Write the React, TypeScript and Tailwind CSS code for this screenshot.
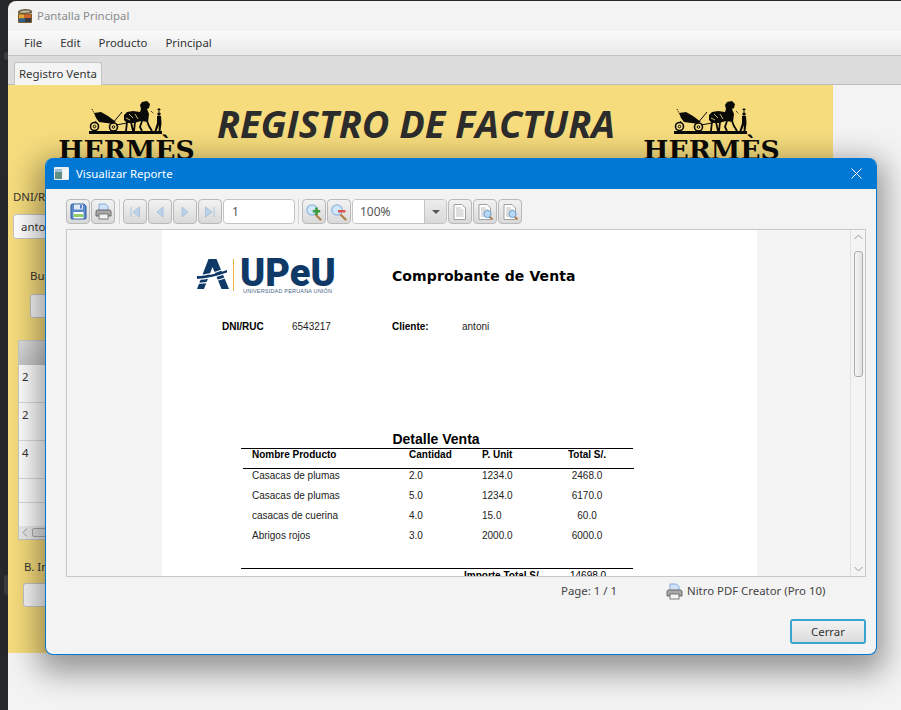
import React from "react";

const ui = { fontFamily: '"Noto Sans", "Liberation Sans", sans-serif' };
const arial = { fontFamily: '"Liberation Sans", Arial, sans-serif' };

function AppIcon() {
  return (
    <svg width="16" height="16" viewBox="0 0 16 16" className="shrink-0">
      <path d="M1 4 Q1 1.5 8 1 Q15 1 15 3.5 L15 5 Q8 7 1 5.5Z" fill="#6b5a3e" />
      <path d="M3 3.5 Q8 2 13 3 L13 4 Q8 5 3 4.5Z" fill="#c7c1ad" />
      <rect x="1" y="5.5" width="14" height="9.5" rx="1" fill="#7c5a28" />
      <rect x="2" y="6.5" width="5" height="4" fill="#e0a83c" />
      <rect x="7" y="6.5" width="7" height="3.5" fill="#d0642c" />
      <rect x="2" y="10.5" width="6" height="3.5" fill="#2e5f8f" />
      <rect x="8" y="10" width="6" height="4" fill="#3a3b40" />
    </svg>
  );
}

function Carriage() {
  return (
    <svg width="75" height="33" viewBox="0 0 75 33" className="block">
      <rect x="0" y="30" width="73" height="3" fill="#0a0a08" />
      <g fill="none" stroke="#0a0a08">
        <circle cx="5.5" cy="25.5" r="4" strokeWidth="1.6" />
        <circle cx="5.5" cy="25.5" r="1.3" strokeWidth="1" />
        <circle cx="24.5" cy="26" r="4" strokeWidth="1.6" />
        <circle cx="24.5" cy="26" r="1.3" strokeWidth="1" />
        <path d="M23 23 L33 11" strokeWidth="1" />
        <path d="M27 24 L38 22" strokeWidth="1" />
        <path d="M3 8 L5 12" strokeWidth="1" strokeDasharray="1 1" />
        <path d="M7 20 L6 22 M21 20 L23 23" strokeWidth="1" />
      </g>
      <path d="M5 12 L12 11 L19 15 L27 21 L21 22.5 L10 21 L7 17Z" fill="#0a0a08" />
      <path d="M35 14 L38 11 L44 10 L51 11 L52 8 L51 4 L53 1 L58 0 L61 3 L60 7 L58 8 L60 13 L59 21 L52 20 L45 22 L38 22 L35 19Z" fill="#0a0a08" />
      <path d="M38 21 L37 30 M42 21 L44 30 M46 21 L45 30 M53 20 L51 26 L53 30 M58 20 L60 25 L63 30" fill="none" stroke="#0a0a08" strokeWidth="1.8" />
      <path d="M40 13 L44 17 M46 13 L49 18 M37 17 L41 19" stroke="#f6dc7d" strokeWidth="0.8" />
      <path d="M62 10 L65 13" stroke="#0a0a08" strokeWidth="1" strokeDasharray="1 1" />
      <circle cx="70" cy="13" r="1.7" fill="#0a0a08" />
      <path d="M70 7 V11 M68.5 8.5 H71.5" stroke="#0a0a08" strokeWidth="1" />
      <path d="M68 15 H72 L72.5 22 L71.5 30 H69.5 L70 24 L67.5 30 H65.5 L68 22Z" fill="#0a0a08" />
    </svg>
  );
}

function Hermes() {
  return (
    <div className="flex flex-col items-center w-[133px] shrink-0">
      <Carriage />
      <div
        className="text-[26.6px] leading-[30px] mt-[1px] font-bold text-[#0a0a08] whitespace-nowrap"
        style={{ fontFamily: '"DejaVu Serif", serif' }}
      >
        HERMÈS
      </div>
    </div>
  );
}

function TBtn({ children }: { children?: React.ReactNode }) {
  return (
    <div className="w-[24px] h-[25px] shrink-0 flex items-center justify-center rounded-[4px] border border-[#b9b9b9] bg-gradient-to-b from-[#f2f2f2] to-[#d9d9d9]">
      {children}
    </div>
  );
}

function Save() {
  return (
    <svg width="17" height="17" viewBox="0 0 17 17">
      <path d="M1 2.5 Q1 1 2.5 1 H14 L16 3 V15 Q16 16 15 16 H2 Q1 16 1 15Z" fill="#5a88c8" stroke="#2f5a9c" strokeWidth="1" />
      <rect x="4" y="1.5" width="9" height="5" fill="#dfe9f6" />
      <rect x="10" y="2" width="2" height="3.5" fill="#4f7fc4" />
      <rect x="3.5" y="9" width="10" height="6.5" fill="#fff" />
      <rect x="3.5" y="11" width="10" height="3" fill="#8fcf6a" />
    </svg>
  );
}

function Printer() {
  return (
    <svg width="17" height="17" viewBox="0 0 17 17">
      <path d="M4 1 H10.5 L13 3.5 V8 H4Z" fill="#cfe2f8" stroke="#7aa5d8" strokeWidth="0.9" />
      <path d="M2.5 7 H14.5 Q16 7 16 9 V13 H1 V9 Q1 7 2.5 7Z" fill="#a8a8a8" stroke="#5e5e5e" strokeWidth="0.9" />
      <rect x="4" y="11" width="9" height="5" fill="#f4f4f4" stroke="#6f6f6f" strokeWidth="0.9" />
    </svg>
  );
}

function Nav({ d }: { d: string }) {
  return (
    <svg width="14" height="14" viewBox="0 0 14 14">
      <path d={d} fill="#bcd2e9" stroke="#a9c3de" strokeWidth="1" />
    </svg>
  );
}

function Zoom({ plus }: { plus: boolean }) {
  return (
    <svg width="18" height="18" viewBox="0 0 18 18">
      <path d="M10 11 L15.5 16.5" stroke="#b4814a" strokeWidth="2.4" strokeLinecap="round" />
      <circle cx="7" cy="7" r="5.2" fill="#cfe6fb" stroke="#8fb6de" strokeWidth="1.2" />
      {plus ? (
        <path d="M11.5 4.5 V12 M7.8 8.2 H15.2" stroke="#3f9a3c" strokeWidth="2.6" />
      ) : (
        <path d="M8 8.2 H15.5" stroke="#d9534f" strokeWidth="2.6" />
      )}
    </svg>
  );
}

function PageIcon({ kind }: { kind: "full" | "h" | "w" }) {
  return (
    <svg width="18" height="18" viewBox="0 0 18 18">
      <path d="M3 1.5 H11 L14.5 5 V16.5 H3Z" fill="#fff" stroke="#a0a0a0" strokeWidth="1" />
      <path d="M5 5 H10 M5 7 H12.5 M5 9 H12.5 M5 11 H12.5 M5 13 H12.5" stroke="#b5b5b5" strokeWidth="0.9" />
      {kind !== "full" && (
        <>
          <path d="M13 13 L16.5 16.5" stroke="#b4814a" strokeWidth="2" />
          <circle cx="11.5" cy="11" r="3.6" fill="#b7d8f5" stroke="#6f9fd0" strokeWidth="1" />
        </>
      )}
    </svg>
  );
}

function Logo() {
  return (
    <div className="flex items-start h-[36px] mt-[2px]">
      <svg width="33" height="30" viewBox="0 0 33 30" className="shrink-0">
        <path d="M11.5 0 H19.5 L32 30 H24.5 L15.5 8 L7 30 H0Z" fill="#0f3a68" />
        <path d="M0 17 Q14 17 30 11 V14 Q14 20 0 20Z" fill="#0f3a68" />
        <path d="M1 16.5 Q14 16 28 9.5 M0 20.5 Q14 20 30 14 M0 24.5 Q14 24 31 18" stroke="#fff" strokeWidth="1.2" fill="none" />
      </svg>
      <div className="w-[1px] h-[32px] bg-[#eeb040] ml-[3px]" />
      <div className="ml-[6px] flex flex-col">
        <span className="text-[38px] leading-[29px] font-black text-[#0f3a68]" style={{ fontFamily: "Roboto, sans-serif" }}>
          UPeU
        </span>
        <span className="ml-[3px] text-[5.5px] leading-[7px] text-[#4a6688] whitespace-nowrap tracking-[0.18px]" style={arial}>
          UNIVERSIDAD PERUANA UNIÓN
        </span>
      </div>
    </div>
  );
}

const rows = [
  ["Casacas de plumas", "2.0", "1234.0", "2468.0"],
  ["Casacas de plumas", "5.0", "1234.0", "6170.0"],
  ["casacas de cuerina", "4.0", "15.0", "60.0"],
  ["Abrigos rojos", "3.0", "2000.0", "6000.0"],
];

const cols = "grid grid-cols-[157px_73px_72px_66px]";

function Report() {
  return (
    <div className="w-[595px] h-[346px] bg-white overflow-hidden shrink-0 text-black" style={arial}>
      <div className="flex pt-[27px] pl-[35px] h-[84px]">
        <div className="w-[195px]">
          <Logo />
        </div>
        <div
          className="text-[14px] font-bold leading-[20px] mt-[9px] whitespace-nowrap tracking-[0.1px]"
          style={{ fontFamily: '"DejaVu Sans", sans-serif' }}
        >
          Comprobante de Venta
        </div>
      </div>
      <div className="flex pl-[60px] text-[10px] leading-[12px] h-[100px] pt-[7px]">
        <span className="w-[70px] font-bold">DNI/RUC</span>
        <span className="w-[100px] text-[#222]">6543217</span>
        <span className="w-[70px] font-bold">Cliente:</span>
        <span className="text-[#222]">antoni</span>
      </div>
      <div className="w-[392px] ml-[79px] mt-[17px]">
        <div className="text-center text-[14px] font-bold leading-[16px] h-[17px] -ml-[2px]">Detalle Venta</div>
        <div className="h-[1px] bg-black" />
        <div className={`${cols} pl-[11px] text-[10px] font-bold leading-[12px] h-[20px] border-b border-black ml-[2px] -mr-[1px]`}>
          <span className="-ml-[2px] whitespace-nowrap">Nombre Producto</span>
          <span className="-ml-[2px]">Cantidad</span>
          <span className="-ml-[2px]">P. Unit</span>
          <span className="-ml-[4px] text-center">Total S/.</span>
        </div>
        <div className="-mt-[3px]">
          {rows.map((r, i) => (
            <div key={i} className={`${cols} pl-[11px] text-[10px] leading-[12px] h-[20px] items-center text-[#222]`}>
              <span className="whitespace-nowrap">{r[0]}</span>
              <span>{r[1]}</span>
              <span>{r[2]}</span>
              <span className="text-center">{r[3]}</span>
            </div>
          ))}
        </div>
        <div className="h-[1px] bg-black mt-[22px]" />
        <div className="flex pl-[223px] text-[10px] leading-[12px] pt-[1px]">
          <span className="w-[106px] font-bold whitespace-nowrap">Importe Total S/.</span>
          <span>14698.0</span>
        </div>
      </div>
    </div>
  );
}

function Dialog() {
  return (
    <div
      className="absolute left-[45px] top-[158px] w-[832px] h-[497px] rounded-[8px] overflow-hidden border-x border-b border-[#0078d4] bg-[#f3f3f3] flex flex-col shadow-[0_10px_30px_8px_rgba(0,0,0,0.38)]"
      style={ui}
    >
      <div className="h-[31px] shrink-0 -mx-[1px] bg-[#0078d4] flex items-center pl-[9px] pr-[15px] text-white">
        <svg width="15" height="13" viewBox="0 0 15 13" className="shrink-0">
          <rect width="15" height="13" rx="1" fill="#e8eef2" />
          <rect x="1" y="2" width="7" height="10" fill="#5f8f82" />
          <rect x="1" y="2" width="7" height="3" fill="#9fc0d8" />
          <rect x="9" y="2" width="5" height="10" fill="#f4f6f7" />
        </svg>
        <span className="ml-[7px] text-[11.4px] leading-none">Visualizar Reporte</span>
        <svg width="11" height="11" viewBox="0 0 11 11" className="ml-auto">
          <path d="M0.5 0.5 L10.5 10.5 M10.5 0.5 L0.5 10.5" stroke="#fff" strokeWidth="1" />
        </svg>
      </div>

      <div className="flex items-center h-[25px] mt-[10px] ml-[20px] text-[12px]">
        <TBtn><Save /></TBtn>
        <div className="w-[1px]" />
        <TBtn><Printer /></TBtn>
        <div className="w-[1px] h-[25px] bg-[#d4d4d4] mx-[3.5px]" />
        <div className="flex gap-[1px] items-center">
          <TBtn><Nav d="M3 2 V12 M11.5 2 L5 7 L11.5 12Z" /></TBtn>
          <TBtn><Nav d="M10 2 L4 7 L10 12Z" /></TBtn>
          <TBtn><Nav d="M4 2 L10 7 L4 12Z" /></TBtn>
          <TBtn><Nav d="M11 2 V12 M2.5 2 L9 7 L2.5 12Z" /></TBtn>
        </div>
        <div className="w-[72px] h-[25px] ml-[1px] bg-white border border-[#c4c4c4] rounded-[4px] flex items-center pl-[8px] text-[#555]">1</div>
        <div className="w-[1px] h-[25px] bg-[#d4d4d4] mx-[3px]" />
        <TBtn><Zoom plus /></TBtn>
        <div className="w-[1px]" />
        <TBtn><Zoom plus={false} /></TBtn>
        <div className="w-[95px] h-[25px] ml-[1px] flex border border-[#c4c4c4] rounded-[4px] overflow-hidden shrink-0">
          <div className="w-[71px] bg-white flex items-center pl-[7px] text-[#555]">100%</div>
          <div className="flex-1 border-l border-[#c4c4c4] bg-gradient-to-b from-[#ececec] to-[#d9d9d9] flex items-center justify-center">
            <div className="w-0 h-0 border-x-[4px] border-x-transparent border-t-[4px] border-t-[#555]" />
          </div>
        </div>
        <div className="flex gap-[1px] ml-[1px]">
          <TBtn><PageIcon kind="full" /></TBtn>
          <TBtn><PageIcon kind="h" /></TBtn>
          <TBtn><PageIcon kind="w" /></TBtn>
        </div>
      </div>

      <div className="h-[348px] mt-[5px] ml-[20px] w-[800px] border border-[#c8c8c8] bg-[#f4f4f4] flex shrink-0">
        <div className="flex-1 pl-[95px]">
          <Report />
        </div>
        <div className="w-[15px] shrink-0 border-l border-[#e2e2e2] flex flex-col items-center pt-[3px] pb-[3px]">
          <svg width="9" height="6" viewBox="0 0 9 6" className="mt-[1px]"><path d="M0.5 5 L4.5 1 L8.5 5" fill="none" stroke="#9a9a9a" /></svg>
          <div className="w-[9px] h-[126px] mt-[11px] rounded-[3px] border border-[#ababab] bg-gradient-to-r from-[#f5f5f5] to-[#e2e2e2]" />
          <svg width="9" height="6" viewBox="0 0 9 6" className="mt-auto mb-[1px]"><path d="M0.5 1 L4.5 5 L8.5 1" fill="none" stroke="#9a9a9a" /></svg>
        </div>
      </div>

      <div className="flex items-center h-[26px] mt-[1px] text-[11.4px] text-[#444]">
        <span className="ml-[515px] w-[105px]">Page: 1 / 1</span>
        <Printer />
        <span className="ml-[4px] whitespace-nowrap">Nitro PDF Creator (Pro 10)</span>
      </div>

      <div className="flex justify-end mt-[15px] pr-[10px]">
        <div className="w-[76px] h-[25px] rounded-[3px] border-2 border-[#3aa6cf] bg-gradient-to-b from-[#f2f2f2] to-[#dcdcdc] flex items-center justify-center text-[11.4px] text-[#333]">
          Cerrar
        </div>
      </div>
    </div>
  );
}

function Panel() {
  return (
    <div className="w-[825px] h-[568px] bg-[#f6dc7d] shrink-0 overflow-hidden text-[11.4px] text-[#333]" style={ui}>
      <div className="flex items-start pl-[52px] pt-[16px] h-[103px]">
        <Hermes />
        <div
          className="w-[452px] pr-[6px] text-center text-[37.8px] leading-[46px] font-bold italic text-[#2c2c2c] whitespace-nowrap"
          style={{ fontFamily: '"Open Sans", sans-serif' }}
        >
          REGISTRO DE FACTURA
        </div>
        <Hermes />
      </div>
      <div className="pl-[5px] h-[17px] leading-[17px]">DNI/RUC</div>
      <div className="ml-[5px] mt-[9px] w-[100px] h-[25px] bg-white border border-[#c4c4c4] rounded-[3px] flex items-center pl-[7px]">antoni</div>
      <div className="ml-[22px] mt-[28px] h-[17px] leading-[17px]">Buscar</div>
      <div className="ml-[22px] mt-[10px] w-[100px] h-[24px] bg-[#f7f7f7] border border-[#c4c4c4] rounded-[3px]" />
      <div className="ml-[10px] mt-[22px] w-[200px] h-[200px] bg-white border border-[#c8c8c8]">
        <div className="h-[24px] bg-gradient-to-b from-[#dcdcdc] to-[#c8c8c8]" />
        <div className="h-[38px] pl-[3px] pt-[3px] border-b border-[#dcdcdc]">2</div>
        <div className="h-[38px] pl-[3px] pt-[3px] border-b border-[#dcdcdc]">2</div>
        <div className="h-[38px] pl-[3px] pt-[3px] border-b border-[#dcdcdc]">4</div>
        <div className="h-[24px] border-b border-[#dcdcdc]" />
        <div className="h-[23px]" />
        <div className="h-[13px] bg-[#ececec] flex items-center pl-[3px]">
          <svg width="6" height="9" viewBox="0 0 6 9"><path d="M5 0.5 L1 4.5 L5 8.5" fill="none" stroke="#999" /></svg>
          <div className="ml-[4px] w-[100px] h-[9px] border border-[#aaa] rounded-[2px] bg-[#e4e4e4]" />
        </div>
      </div>
      <div className="ml-[16px] mt-[18px] h-[17px] leading-[17px]">B. Inicio</div>
      <div className="ml-[15px] mt-[8px] w-[100px] h-[24px] bg-[#f7f7f7] border border-[#c4c4c4] rounded-[3px]" />
    </div>
  );
}

export default function App() {
  return (
    <div className="relative w-[901px] h-[710px] overflow-hidden bg-[#26272b] flex">
      <div className="w-[8px] shrink-0 flex flex-col">
        <div className="h-[52px]" />
        <div className="ml-[4px] h-[8px] rounded-l-[3px] bg-[#3a3b3f]" />
        <div className="h-[515px]" />
        <div className="ml-[4px] h-[20px] rounded-l-[3px] bg-[#3a3b3f]" />
      </div>
      <div className="flex-1 mt-[1px] rounded-tl-[8px] overflow-hidden bg-[#f3f3f3] flex flex-col" style={ui}>
        <div className="h-[30px] shrink-0 flex items-center pl-[9px] text-[11.4px] text-[#8a8a8a]">
          <AppIcon />
          <span className="ml-[4px]">Pantalla Principal</span>
        </div>
        <div className="h-[25px] shrink-0 bg-gradient-to-b from-[#fafafa] to-[#e9e9e9] border-b border-[#c2c2c2] flex items-center text-[11.4px] text-[#333]">
          <span className="ml-[16px]">File</span>
          <span className="ml-[18px]">Edit</span>
          <span className="ml-[18px]">Producto</span>
          <span className="ml-[18px]">Principal</span>
        </div>
        <div className="h-[29px] shrink-0 bg-[#dcdcdc] border-b border-[#bdbdbd] flex items-end pl-[6px]">
          <div className="h-[23px] px-[4px] -mb-[1px] bg-[#f4f4f4] border border-b-0 border-[#c4c4c4] rounded-t-[3px] flex items-center text-[11.4px] text-[#333]">
            Registro Venta
          </div>
        </div>
        <Panel />
      </div>
      <Dialog />
    </div>
  );
}
